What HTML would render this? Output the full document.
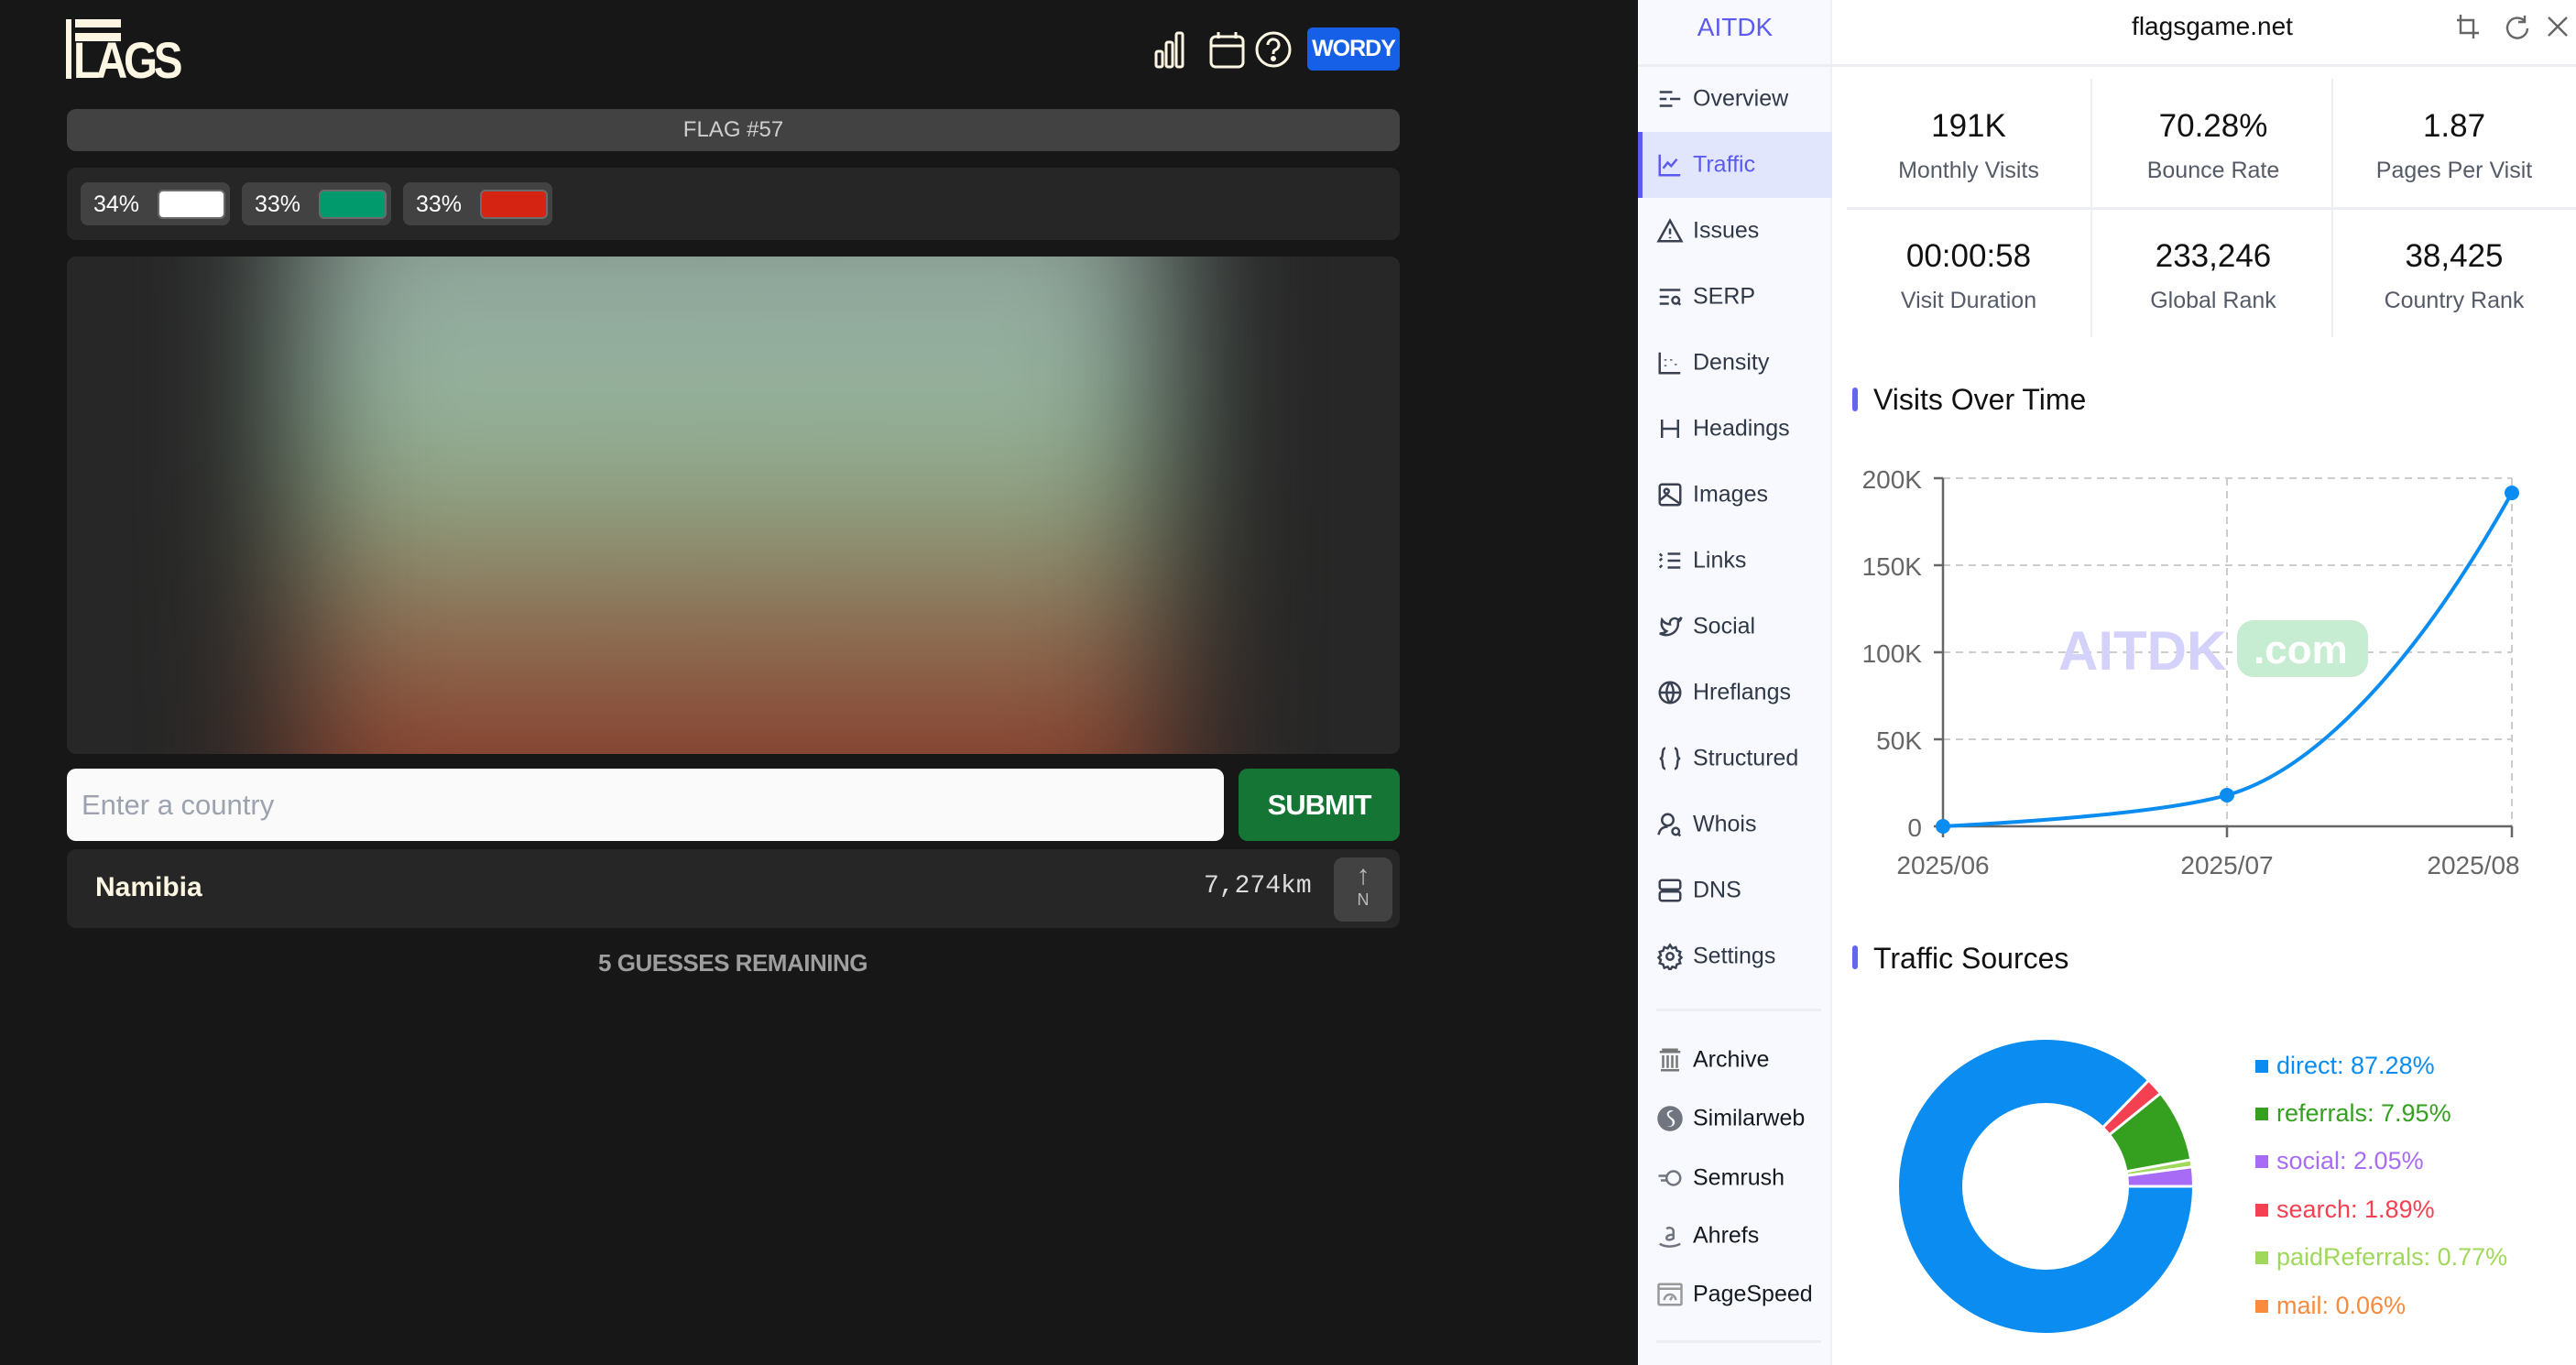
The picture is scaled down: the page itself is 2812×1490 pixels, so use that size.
<!DOCTYPE html>
<html><head><meta charset="utf-8">
<style>
*{box-sizing:border-box;margin:0;padding:0}
body{width:2812px;height:1490px;position:relative;overflow:hidden;background:#171717;font-family:"Liberation Sans",sans-serif}
.a{position:absolute}
.chip{position:absolute;top:199px;height:47px;width:163px;background:#424242;border-radius:8px;color:#fff;font-size:25px}
.chip span{position:absolute;left:14px;top:10px}
.chip i{position:absolute;left:84px;top:8px;width:74px;height:32px;border-radius:6px;border:2px solid #6b6b6b}
.nav{position:absolute;left:1788px;width:212px;height:72px;color:#2f3846;font-size:25px}
.nav span{position:absolute;left:60px;top:50%;transform:translateY(-50%)}
.nav svg{position:absolute;left:20px;top:50%;transform:translateY(-50%);width:30px;height:30px;fill:none;stroke:#3a4252;stroke-width:2}
.nav2{color:#151a22}
.stat{position:absolute;width:266px;text-align:center}
.stat b{display:block;font-weight:normal;font-size:35px;color:#111}
.stat span{display:block;font-size:25px;color:#555b66;margin-top:14px}
.leg{position:absolute;left:2485px;font-size:27px}
.leg i{position:absolute;left:-23px;top:9px;width:14px;height:14px}
</style></head><body>

<div class="a" style="left:72px;top:21px;width:6px;height:65px;background:#fdf6e3"></div>
<div class="a" style="left:82px;top:21px;width:50px;height:9px;background:#fdf6e3"></div>
<div class="a" style="left:82px;top:36px;width:50px;height:9px;background:#fdf6e3"></div>
<div class="a" style="left:80px;top:38px;font:bold 56px/1 'Liberation Sans Narrow','Liberation Sans',sans-serif;color:#fdf6e3;letter-spacing:-5px;transform:scaleX(0.85);transform-origin:left">LAGS</div>

<svg class="a" style="left:1260px;top:32px" width="160" height="44" viewBox="0 0 160 44" fill="none" stroke="#fdf6e3" stroke-width="3">
<rect x="2" y="24" width="7" height="17" rx="2"/><rect x="13" y="14" width="7" height="27" rx="2"/><rect x="24" y="4" width="7" height="37" rx="2"/>
<rect x="62" y="8" width="35" height="33" rx="5"/><line x1="62" y1="18" x2="97" y2="18"/><line x1="70" y1="3" x2="70" y2="10"/><line x1="89" y1="3" x2="89" y2="10"/>
<circle cx="130" cy="22" r="18"/><path d="M124 17a6 6 0 1 1 8 5.5c-2 1-2 2.5-2 4.5"/><circle cx="130" cy="32" r="1.5" fill="#fdf6e3"/>
</svg>
<div class="a" style="left:1427px;top:30px;width:101px;height:47px;background:#1660e8;border-radius:6px;color:#fff;font:bold 25px/47px 'Liberation Sans';text-align:center;letter-spacing:-1px">WORDY</div>

<div class="a" style="left:73px;top:119px;width:1455px;height:46px;background:#424242;border-radius:10px;color:#cfcfcf;font-size:24px;line-height:46px;text-align:center">FLAG #57</div>

<div class="a" style="left:73px;top:183px;width:1455px;height:79px;background:#262626;border-radius:10px"></div>
<div class="chip" style="left:88px"><span>34%</span><i style="background:#fff"></i></div>
<div class="chip" style="left:264px"><span>33%</span><i style="background:#009a6c"></i></div>
<div class="chip" style="left:440px"><span>33%</span><i style="background:#d52512"></i></div>

<div class="a" style="left:73px;top:280px;width:1455px;height:543px;background:#272727;border-radius:10px;overflow:hidden">
  <div class="a" style="left:250px;top:-150px;width:950px;height:850px;filter:blur(75px);background:linear-gradient(180deg,#7f8a85 0%,#98b5a6 30%,#90ac8c 45%,#8b8464 58%,#8d6048 70%,#883f2c 84%,#74281c 100%)"></div>
</div>

<div class="a" style="left:73px;top:839px;width:1263px;height:79px;background:#fafafa;border-radius:10px;color:#9ca3af;font-size:31px;line-height:79px;padding-left:16px">Enter a country</div>
<div class="a" style="left:1352px;top:839px;width:176px;height:79px;background:#157535;border-radius:10px;color:#fff;font:bold 31px/79px 'Liberation Sans';text-align:center;letter-spacing:-1px">SUBMIT</div>

<div class="a" style="left:73px;top:927px;width:1455px;height:86px;background:#262626;border-radius:10px"></div>
<div class="a" style="left:104px;top:952px;color:#fdf6e3;font:bold 30px 'Liberation Sans'">Namibia</div>
<div class="a" style="left:1314px;top:952px;color:#ddd;font:28px 'Liberation Mono',monospace">7,274km</div>
<div class="a" style="left:1456px;top:936px;width:64px;height:70px;background:#424242;border-radius:10px;color:#bbb;text-align:center">
  <div style="font-size:30px;line-height:32px;margin-top:4px">↑</div><div style="font-size:18px">N</div></div>
<div class="a" style="left:0;width:1600px;top:1036px;text-align:center;color:#9e9e9e;font:bold 26px 'Liberation Sans';letter-spacing:-0.5px">5 GUESSES REMAINING</div>

<div class="a" style="left:1788px;top:0;width:1024px;height:1490px;background:#fff"></div>
<div class="a" style="left:1788px;top:0;width:212px;height:1490px;background:#f8f9fe;border-right:2px solid #eef0f5"></div>
<div class="a" style="left:1788px;top:70px;width:1024px;height:3px;background:#eceef2"></div>
<div class="a" style="left:1788px;top:14px;width:212px;text-align:center;color:#5b5bf0;font-size:28px">AITDK</div>
<div class="a" style="left:2000px;top:13px;width:830px;text-align:center;color:#111;font-size:28px">flagsgame.net</div>
<svg class="a" style="left:2680px;top:14px" width="124" height="32" viewBox="0 0 124 32" fill="none" stroke="#666" stroke-width="2.4">
<path d="M6 2v20h20M2 8h18v20"/><path d="M76 9a11 11 0 1 0 3 8M76 3v7h-7"/><path d="M102 5l20 20M122 5l-20 20"/></svg>

<div class="a" style="left:1788px;top:144px;width:212px;height:72px;background:#e1e6fd;border-left:5px solid #5b5bf0"></div>

<div class="nav" style="top:72px"><svg viewBox="0 0 24 24"><path d="M3 6h11M3 12h6M12 12h9M3 18h11"/></svg><span>Overview</span></div>
<div class="nav" style="top:144px;color:#5b5bf0"><svg viewBox="0 0 24 24" style="stroke:#5b5bf0"><path d="M3 3v18h18M6 15l4-5 3 3 5-6"/></svg><span>Traffic</span></div>
<div class="nav" style="top:216px"><svg viewBox="0 0 24 24"><path d="M12 3L2 21h20zM12 10v5M12 17.5v1"/></svg><span>Issues</span></div>
<div class="nav" style="top:288px"><svg viewBox="0 0 24 24"><path d="M3 6h18M3 12h8M3 18h8"/><circle cx="17" cy="15" r="3"/><path d="M19 17l2 2"/></svg><span>SERP</span></div>
<div class="nav" style="top:360px"><svg viewBox="0 0 24 24"><path d="M3 3v18h18M8 9v1M13 9v1M8 14v1M17 13v1"/></svg><span>Density</span></div>
<div class="nav" style="top:432px"><svg viewBox="0 0 24 24"><path d="M5 4v16M19 4v16M5 12h14"/></svg><span>Headings</span></div>
<div class="nav" style="top:504px"><svg viewBox="0 0 24 24"><rect x="3" y="3" width="18" height="18" rx="2"/><circle cx="9" cy="9" r="2"/><path d="M3 17l6-5 12 8"/></svg><span>Images</span></div>
<div class="nav" style="top:576px"><svg viewBox="0 0 24 24"><path d="M10 6h11M10 12h11M10 18h11M3 6l2 2M3 12l2-2M3 18l2-2"/></svg><span>Links</span></div>
<div class="nav" style="top:648px"><svg viewBox="0 0 24 24"><path d="M22 4s-1 3-3 4c1 8-7 14-16 10 4 0 6-2 6-2S3 14 5 6c2 3 5 4 7 4-1-4 4-7 7-4 1 0 3-2 3-2z"/></svg><span>Social</span></div>
<div class="nav" style="top:720px"><svg viewBox="0 0 24 24"><circle cx="12" cy="12" r="9"/><path d="M3 12h18M12 3c-4 5-4 13 0 18M12 3c4 5 4 13 0 18"/></svg><span>Hreflangs</span></div>
<div class="nav" style="top:792px"><svg viewBox="0 0 24 24"><path d="M8 3c-3 0-2 5-3 8-1 1-2 1-2 1s1 0 2 1c1 3 0 8 3 8M16 3c3 0 2 5 3 8 1 1 2 1 2 1s-1 0-2 1c-1 3 0 8-3 8"/></svg><span>Structured</span></div>
<div class="nav" style="top:864px"><svg viewBox="0 0 24 24"><circle cx="10" cy="8" r="5"/><path d="M2 21c1-5 4-7 8-7"/><circle cx="17" cy="18" r="3"/><path d="M19 20l2 2"/></svg><span>Whois</span></div>
<div class="nav" style="top:936px"><svg viewBox="0 0 24 24"><rect x="3" y="3" width="18" height="8" rx="2"/><rect x="3" y="13" width="18" height="8" rx="2"/></svg><span>DNS</span></div>
<div class="nav" style="top:1008px"><svg viewBox="0 0 24 24"><circle cx="12" cy="12" r="3"/><path d="M12 2l2 3 3-1 1 3 3 1-1 3 2 2-2 2 1 3-3 1-1 3-3-1-2 3-2-3-3 1-1-3-3-1 1-3-2-2 2-2-1-3 3-1 1-3 3 1z"/></svg><span>Settings</span></div>
<div class="a" style="left:1808px;top:1101px;width:180px;height:3px;background:#eceef2"></div>

<div class="nav nav2" style="top:1121px"><svg viewBox="0 0 24 24" style="stroke:#777"><path d="M3 5h18M4 21h16M6 8v11M10 8v11M14 8v11M18 8v11M5 3h14"/></svg><span>Archive</span></div>
<div class="nav nav2" style="top:1185px"><svg viewBox="0 0 24 24" style="stroke:none;fill:#70757f"><circle cx="12" cy="12" r="11"/><path d="M15 5c-4-1-7 2-5 5s5 3 4 7c-1 2-3 2-5 2 4 1 8-1 7-5-1-3-5-3-5-6 0-1 2-2 4-3z" fill="#f8f9fe"/></svg><span>Similarweb</span></div>
<div class="nav nav2" style="top:1250px"><svg viewBox="0 0 24 24" style="stroke:#70757f"><circle cx="15" cy="12" r="6"/><path d="M2 10h8M4 14h6"/></svg><span>Semrush</span></div>
<div class="nav nav2" style="top:1313px"><svg viewBox="0 0 24 24" style="stroke:#70757f"><path d="M9 6c2-2 6-1 6 2v7M15 11c-4 0-6 1-6 3s4 2 6 0M3 19c5 3 12 3 18 0"/></svg><span>Ahrefs</span></div>
<div class="nav nav2" style="top:1377px"><svg viewBox="0 0 24 24" style="stroke:#999"><rect x="2" y="3" width="20" height="18" rx="1"/><path d="M2 7h20M7 17a5 5 0 0 1 10 0M12 17l2-3"/></svg><span>PageSpeed</span></div>
<div class="a" style="left:1808px;top:1463px;width:180px;height:3px;background:#eceef2"></div>

<div class="a" style="left:2016px;top:226px;width:796px;height:3px;background:#eceef2"></div>
<div class="a" style="left:2282px;top:86px;width:2px;height:282px;background:#eceef2"></div>
<div class="a" style="left:2545px;top:86px;width:2px;height:282px;background:#eceef2"></div>
<div class="stat" style="left:2016px;top:118px"><b>191K</b><span>Monthly Visits</span></div>
<div class="stat" style="left:2283px;top:118px"><b>70.28%</b><span>Bounce Rate</span></div>
<div class="stat" style="left:2546px;top:118px"><b>1.87</b><span>Pages Per Visit</span></div>
<div class="stat" style="left:2016px;top:260px"><b>00:00:58</b><span>Visit Duration</span></div>
<div class="stat" style="left:2283px;top:260px"><b>233,246</b><span>Global Rank</span></div>
<div class="stat" style="left:2546px;top:260px"><b>38,425</b><span>Country Rank</span></div>

<div class="a" style="left:2022px;top:423px;width:6px;height:26px;border-radius:3px;background:#6366f1"></div>
<div class="a" style="left:2045px;top:418px;font-size:32px;color:#111">Visits Over Time</div>
<div class="a" style="left:2022px;top:1032px;width:6px;height:26px;border-radius:3px;background:#6366f1"></div>
<div class="a" style="left:2045px;top:1028px;font-size:32px;color:#111">Traffic Sources</div>

<svg class="a" style="left:0;top:0" width="2812" height="1490" fill="none">
<g stroke="#ccc" stroke-width="2" stroke-dasharray="8 6" fill="none">
<path d="M2121 522H2742M2121 617H2742M2121 712H2742M2121 807H2742M2431 522V902M2742 522V902"/></g>
<g stroke="#666" stroke-width="2.5" fill="none"><path d="M2121 522V902H2742M2111 522h10M2111 617h10M2111 712h10M2111 807h10M2111 902h10M2121 902v12M2431 902v12M2742 902v12"/></g>
<g font-family="Liberation Sans" font-size="28" fill="#666" text-anchor="end">
<text x="2098" y="533">200K</text><text x="2098" y="628">150K</text><text x="2098" y="723">100K</text><text x="2098" y="818">50K</text><text x="2098" y="913">0</text></g>
<g font-family="Liberation Sans" font-size="28" fill="#666" text-anchor="middle">
<text x="2121" y="954">2025/06</text><text x="2431" y="954">2025/07</text><text x="2700" y="954">2025/08</text></g>
<text x="2247" y="731" font-family="Liberation Sans" font-weight="bold" font-size="60" fill="#d4d1fb">AITDK</text>
<rect x="2442" y="677" width="143" height="62" rx="18" fill="#c6ecd2"/>
<text x="2460" y="724" font-family="Liberation Sans" font-weight="bold" font-size="44" fill="#fff">.com</text>
<path d="M2121 902C2250 895 2370 885 2431 868C2530 840 2640 720 2742 538" stroke="#0a8cf0" stroke-width="4" fill="none"/>
<g fill="#0a8cf0"><circle cx="2121" cy="902" r="8"/><circle cx="2431" cy="868" r="8"/><circle cx="2742" cy="538" r="8"/></g>

<g transform="translate(2233 1295)" fill="none" stroke-width="69">
<circle r="125.5" stroke="#0a8cf0" stroke-dasharray="688.2 1000"/>
<circle r="125.5" stroke="#f44050" stroke-dasharray="14.9 1000" transform="rotate(314.2)"/>
<circle r="125.5" stroke="#35a020" stroke-dasharray="62.7 1000" transform="rotate(321)"/>
<circle r="125.5" stroke="#9fd85a" stroke-dasharray="6.1 1000" transform="rotate(349.6)"/>
<circle r="125.5" stroke="#a86bf5" stroke-dasharray="16.2 1000" transform="rotate(352.4)"/>
<g stroke="#fff" stroke-width="3">
<line x1="90" x2="161"/><line x1="90" x2="161" transform="rotate(314.2)"/><line x1="90" x2="161" transform="rotate(321)"/><line x1="90" x2="161" transform="rotate(349.6)"/><line x1="90" x2="161" transform="rotate(352.4)"/></g>
</g>
</svg>

<div class="leg" style="top:1148px;color:#0a8cf0"><i style="background:#0a8cf0"></i>direct: 87.28%</div>
<div class="leg" style="top:1200px;color:#35a020"><i style="background:#35a020"></i>referrals: 7.95%</div>
<div class="leg" style="top:1252px;color:#a86bf5"><i style="background:#a86bf5"></i>social: 2.05%</div>
<div class="leg" style="top:1305px;color:#f44050"><i style="background:#f44050"></i>search: 1.89%</div>
<div class="leg" style="top:1357px;color:#9fd85a"><i style="background:#9fd85a"></i>paidReferrals: 0.77%</div>
<div class="leg" style="top:1410px;color:#fa8a3c"><i style="background:#fa8a3c"></i>mail: 0.06%</div>
</body></html>
